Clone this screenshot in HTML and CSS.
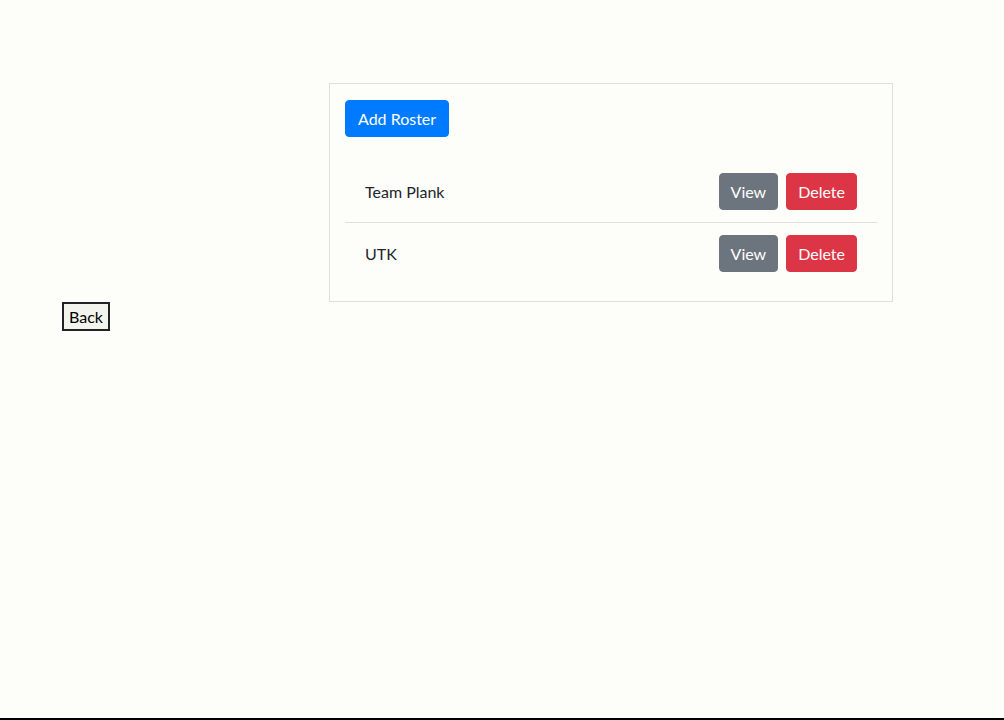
FILE: index.html
```html
<!DOCTYPE html>
<html lang="en">
<head>
    <meta charset="UTF-8">
    <meta name="viewport" content="width=device-width, initial-scale=1.0">
    <title>Rosters</title>
    <link rel="stylesheet" href="styles.css">
</head>
<body>
    <div id="page">
        <div class="roster-card">
            <button class="btn btn-primary">Add Roster</button>
            <ul class="roster-list">
                <li class="roster-item">
                    <span class="roster-name">Team Plank</span>
                    <div class="roster-actions">
                        <button class="btn btn-secondary">View</button>
                        <button class="btn btn-danger">Delete</button>
                    </div>
                </li>
                <li class="roster-item">
                    <span class="roster-name">UTK</span>
                    <div class="roster-actions">
                        <button class="btn btn-secondary">View</button>
                        <button class="btn btn-danger">Delete</button>
                    </div>
                </li>
            </ul>
        </div>
        <button class="back-button">Back</button>
        <div class="page-bottom"></div>
    </div>
</body>
</html>
```

FILE: styles.css
```css
body {
    margin: 0;
    background-color: #fdfdf9;
    color: #212529;
    font-family: Lato, "Noto Sans", sans-serif;
    font-size: 16px;
}

#page {
    display: flex;
    flex-direction: column;
    align-items: flex-start;
    min-height: 100vh;
    padding-top: 83px;
    box-sizing: border-box;
}

.roster-card {
    width: 564px;
    margin-left: 329px;
    padding: 16px 15px 17px 15px;
    border: 1px solid #dededa;
    box-sizing: border-box;
}

.btn {
    font-family: inherit;
    font-size: 16px;
    line-height: 23px;
    padding: 6px 12px;
    border: 1px solid transparent;
    border-radius: 4px;
    color: #fff;
    cursor: pointer;
}

.btn-primary {
    background-color: #007bff;
    border-color: #007bff;
}

.btn-secondary {
    padding: 6px 11px;
    background-color: #6c757d;
    border-color: #6c757d;
}

.btn-danger {
    padding: 6px 11px;
    background-color: #dc3545;
    border-color: #dc3545;
}

.roster-list {
    list-style: none;
    margin: 24px 0 0 0;
    padding: 0;
}

.roster-item {
    display: flex;
    justify-content: space-between;
    align-items: center;
    padding: 12px 20px 12px 20px;
}

.roster-item + .roster-item {
    border-top: 1px solid #dededa;
}

.roster-actions {
    display: flex;
    gap: 8px;
}

.back-button {
    margin-left: 62px;
    padding: 3px 5px;
    font-family: inherit;
    font-size: 16px;
    line-height: 19px;
    background-color: #f4f4ee;
    color: #000;
    border: 2px solid #222;
}

.page-bottom {
    margin-top: auto;
    align-self: stretch;
    height: 2px;
    background-color: #000;
}
```
